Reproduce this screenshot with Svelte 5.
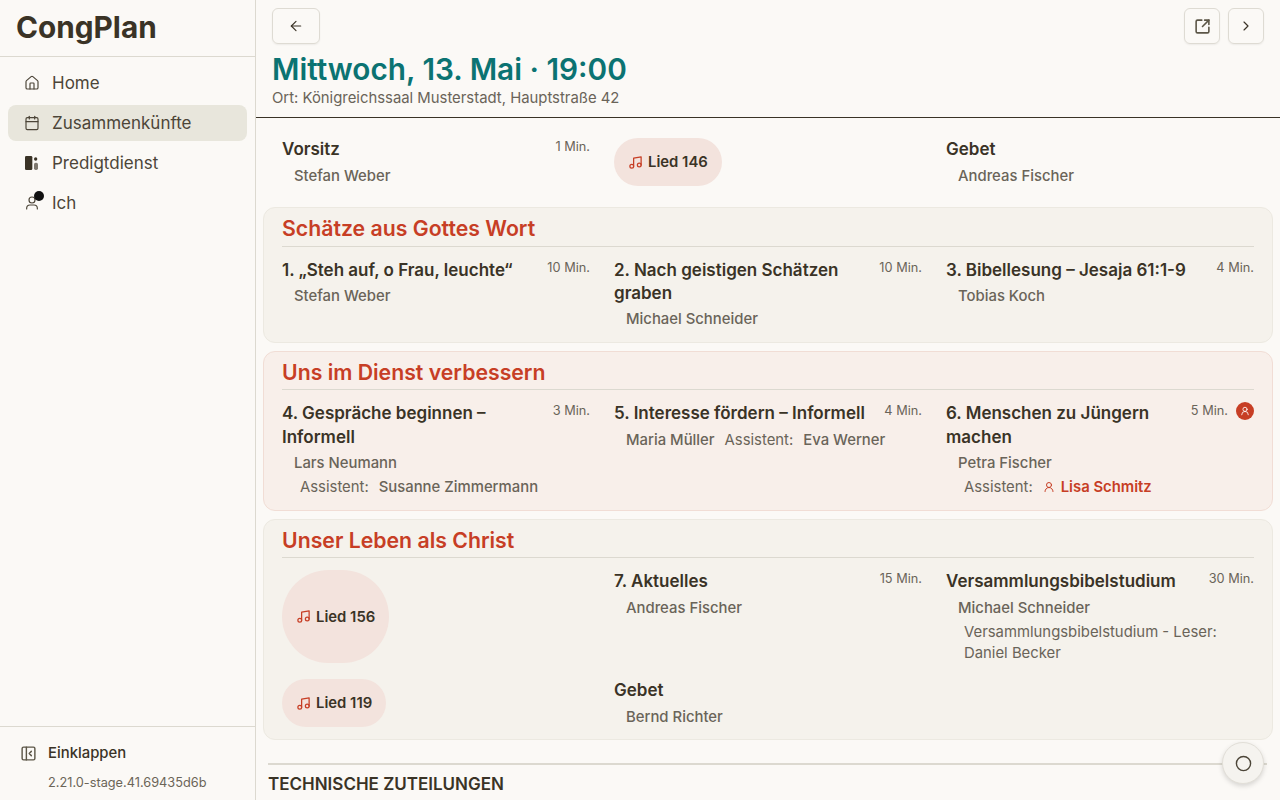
<script>
  const s1 = [
    { t: '1. „Steh auf, o Frau, leuchte“', m: '10 Min.', n: 'Stefan Weber' },
    { t: '2. Nach geistigen Schätzen graben', m: '10 Min.', n: 'Michael Schneider' },
    { t: '3. Bibellesung – Jesaja 61:1-9', m: '4 Min.', n: 'Tobias Koch' }
  ];
</script>

{#snippet music()}
  <svg class="ic-music" viewBox="0 0 24 24"><path d="M9 18V5l12-2v13" /><circle cx="6" cy="18" r="3" /><circle cx="18" cy="16" r="3" /></svg>
{/snippet}

{#snippet user(cls)}
  <svg class={cls} viewBox="0 0 24 24"><circle cx="12" cy="8" r="5" /><path d="M20 21a8 8 0 0 0-16 0" /></svg>
{/snippet}

{#snippet head(t, m)}
  <div class="head"><h3>{t}</h3><span class="min">{m}</span></div>
{/snippet}

{#snippet lied(n)}
  <div class="lied">{@render music()}<span>Lied {n}</span></div>
{/snippet}

<div class="app">
  <aside>
    <div class="brand">CongPlan</div>
    <nav>
      <div class="nav">
        <svg viewBox="0 0 24 24"><path d="M15 21v-8a1 1 0 0 0-1-1h-4a1 1 0 0 0-1 1v8" /><path d="M3 10a2 2 0 0 1 .709-1.528l7-5.999a2 2 0 0 1 2.582 0l7 5.999A2 2 0 0 1 21 10v9a2 2 0 0 1-2 2H5a2 2 0 0 1-2-2z" /></svg>
        <span>Home</span>
      </div>
      <div class="nav active">
        <svg viewBox="0 0 24 24"><path d="M8 2v4" /><path d="M16 2v4" /><rect x="3" y="4" width="18" height="18" rx="2" /><path d="M3 10h18" /></svg>
        <span>Zusammenkünfte</span>
      </div>
      <div class="nav">
        <svg viewBox="0 0 24 24" class="solid"><rect x="1.5" y="1.5" width="11" height="21" rx="2" /><circle cx="17.5" cy="6" r="2.5" /><rect x="15" y="11.5" width="6" height="11" rx="2.5" opacity=".65" /></svg>
        <span>Predigtdienst</span>
      </div>
      <div class="nav">
        <div class="ich">
          <svg viewBox="0 0 24 24"><circle cx="12" cy="7.5" r="4.5" /><path d="M20 21v-1a5 5 0 0 0-5-5H9a5 5 0 0 0-5 5v1" /></svg>
          <i class="dot"></i>
        </div>
        <span>Ich</span>
      </div>
    </nav>
    <div class="foot">
      <div class="collapse">
        <svg viewBox="0 0 24 24"><rect x="3" y="3" width="18" height="18" rx="2" /><path d="M9 3v18" /><path d="m16 15-3-3 3-3" /></svg>
        <span>Einklappen</span>
      </div>
      <div class="version">2.21.0-stage.41.69435d6b</div>
    </div>
  </aside>

  <main>
    <header>
      <div class="btns">
        <button class="back" aria-label="Zurück"><svg viewBox="0 0 24 24"><path d="m12 19-7-7 7-7" /><path d="M19 12H5" /></svg></button>
        <div class="right">
          <button class="sq" aria-label="Öffnen"><svg class="thick" viewBox="0 0 24 24"><path d="M21 13v6a2 2 0 0 1-2 2H5a2 2 0 0 1-2-2V5a2 2 0 0 1 2-2h6" /><path d="m21 3-9 9" /><path d="M15 3h6v6" /></svg></button>
          <button class="sq" aria-label="Weiter"><svg viewBox="0 0 24 24"><path d="m9 18 6-6-6-6" /></svg></button>
        </div>
      </div>
      <h1>Mittwoch, 13. Mai · 19:00</h1>
      <p class="ort">Ort: Königreichssaal Musterstadt, Hauptstraße 42</p>
    </header>

    <div class="content">
      <div class="grid top">
        <div class="item">
          {@render head('Vorsitz', '1 Min.')}
          <div class="name">Stefan Weber</div>
        </div>
        <div>{@render lied(146)}</div>
        <div class="item">
          {@render head('Gebet', '')}
          <div class="name">Andreas Fischer</div>
        </div>
      </div>

      <section class="first">
        <h2>Schätze aus Gottes Wort</h2>
        <div class="grid">
          {#each s1 as it}
            <div class="item">
              {@render head(it.t, it.m)}
              <div class="name">{it.n}</div>
            </div>
          {/each}
        </div>
      </section>

      <section class="pink">
        <h2>Uns im Dienst verbessern</h2>
        <div class="grid">
          <div class="item">
            {@render head('4. Gespräche beginnen – Informell', '3 Min.')}
            <div class="name">Lars Neumann</div>
            <div class="asst"><span>Assistent:</span><span class="val">Susanne Zimmermann</span></div>
          </div>
          <div class="item">
            {@render head('5. Interesse fördern – Informell', '4 Min.')}
            <div class="name inline">Maria Müller<span class="asst-in"><span>Assistent:</span><span class="val">Eva Werner</span></span></div>
          </div>
          <div class="item">
            <div class="head">
              <h3>6. Menschen zu Jüngern machen</h3>
              <span class="min">5 Min.</span>
              <span class="badge">{@render user('ic-badge')}</span>
            </div>
            <div class="name">Petra Fischer</div>
            <div class="asst"><span>Assistent:</span><span class="me">{@render user('ic-me')}Lisa Schmitz</span></div>
          </div>
        </div>
      </section>

      <section>
        <h2>Unser Leben als Christ</h2>
        <div class="grid">
          <div class="stretch">{@render lied(156)}</div>
          <div class="item">
            {@render head('7. Aktuelles', '15 Min.')}
            <div class="name">Andreas Fischer</div>
          </div>
          <div class="item">
            {@render head('Versammlungsbibelstudium', '30 Min.')}
            <div class="name">Michael Schneider</div>
            <div class="reader">Versammlungsbibelstudium - Leser: Daniel Becker</div>
          </div>
          <div>{@render lied(119)}</div>
          <div class="item">
            {@render head('Gebet', '')}
            <div class="name">Bernd Richter</div>
          </div>
        </div>
      </section>

      <div class="tech">
        <h4>TECHNISCHE ZUTEILUNGEN</h4>
      </div>
    </div>

    <button class="fab" aria-label="Aktion"><svg viewBox="0 0 24 24"><circle cx="12" cy="12" r="10" /></svg></button>
  </main>
</div>

<style>
  :global(body) { margin: 0; background: #fbf9f6; }
  .app {
    display: flex; height: 800px; overflow: hidden;
    font-family: Inter, "Liberation Sans", sans-serif; color: #3a3326;
    background: #fbf9f6;
  }
  svg { width: 16px; height: 16px; fill: none; stroke: currentColor; stroke-width: 2; stroke-linecap: round; stroke-linejoin: round; flex: none; display: block; }

  aside { width: 256px; flex: none; box-sizing: border-box; border-right: 1px solid #dcd9d0; display: flex; flex-direction: column; }
  .brand { height: 56px; padding: 0 16px; line-height: 55px; font-size: 29.75px; font-weight: 700; color: #3a3326; border-bottom: 1px solid #dcd9d0; }
  nav { padding: 8px; display: flex; flex-direction: column; gap: 4px; }
  .nav { display: flex; align-items: center; gap: 12px; height: 36px; padding: 0 16px; border-radius: 8px; font-size: 17px; color: #4c4538; }
  .nav svg { stroke-width: 1.75; }
  .nav .solid { stroke: none; fill: #3a3326; }
  .nav.active { background: #e8e6dc; }
  .ich { position: relative; width: 16px; height: 16px; }
  .dot { position: absolute; width: 10px; height: 10px; border-radius: 50%; background: #111; top: -4.3px; left: 10px; }
  .foot { margin-top: auto; border-top: 1px solid #dcd9d0; padding: 16px 20px 7px; }
  .collapse { display: flex; align-items: center; gap: 11px; font-size: 14.875px; font-weight: 500; height: 20px; }
  .collapse svg { width: 17px; height: 17px; stroke-width: 2; color: #5c5647; }
  .version { font-size: 12.75px; color: #6b6558; margin: 10px 0 0 28px; line-height: 20px; }

  main { flex: 1; min-width: 0; position: relative; display: flex; flex-direction: column; }
  header { padding: 8px 16px 9px; border-bottom: 1px solid #3a3326; flex: none; }
  .btns { display: flex; justify-content: space-between; }
  .right { display: flex; gap: 8px; }
  button { background: transparent; border: 1px solid #dedbd3; border-radius: 6px; box-shadow: 0 1px 2px rgba(0,0,0,.06); height: 36px; padding: 0; display: flex; align-items: center; justify-content: center; color: #3a3326; }
  .back { width: 48px; }
  .sq { width: 36px; }
  .back svg, .sq svg { width: 16px; height: 16px; stroke-width: 1.75; }
  .sq svg.thick { width: 17px; height: 17px; stroke-width: 2.25; color: #5c5647; }
  h1 { margin: 8px 0 0; font-size: 29.75px; line-height: 34px; font-weight: 600; color: #0b7372; }
  .ort { margin: 2px 0 0; font-size: 14.875px; line-height: 20px; color: #6a6459; }

  .content { padding: 0 7px; display: flex; flex-direction: column; gap: 8px; min-height: 0; }
  .grid { display: grid; grid-template-columns: repeat(3, 308px); column-gap: 24px; row-gap: 16px; }
  .top { padding: 20px 19px 11.985px; }
  section { border: 1px solid #ece9e1; border-radius: 12px; background: #f5f2ec; padding: 6px 18px 10.625px; }
  section.first { padding-bottom: 11px; }
  section.first .name { margin-top: 1.25px; }
  section.pink { background: #f8efea; border-color: #f1ddd5; }
  h2 { margin: 0 0 12px; padding-bottom: 3.5px; font-size: 21.25px; line-height: 28px; font-weight: 600; color: #c73e25; border-bottom: 1px solid #dcd9d0; }
  .head { display: flex; align-items: flex-start; gap: 8px; }
  h3 { margin: 0; flex: 1; font-size: 17px; line-height: 23.375px; font-weight: 600; color: #3a3326; }
  .min { font-size: 12.75px; line-height: 18px; color: #6a6459; white-space: nowrap; }
  .name { margin: 2.125px 0 0 12px; font-size: 14.875px; font-weight: 500; line-height: 24px; color: #6a6459; }
  .inline { display: flex; gap: 10px; }
  .asst-in { display: flex; gap: 10px; font-weight: 400; }
  .asst { margin-left: 18px; font-size: 14.875px; line-height: 24px; color: #6a6459; display: flex; gap: 10px; }
  .val { font-weight: 500; }
  .reader { margin: 1.7px 0 -0.6px 18px; font-size: 14.875px; line-height: 21px; color: #6a6459; }
  .me { display: inline-flex; align-items: center; gap: 6px; color: #c73e25; font-weight: 600; }
  .badge { width: 18px; height: 18px; border-radius: 50%; background: #c73e25; display: flex; align-items: center; justify-content: center; color: #fff; }
  :global(.ic-badge) { width: 10px !important; height: 10px !important; }
  :global(.ic-me) { width: 12px !important; height: 12px !important; }
  .lied { display: inline-flex; align-items: center; gap: 5px; height: 48px; padding: 0 14px; box-sizing: border-box; border-radius: 9999px; background: #f3e3dd; font-size: 14.875px; font-weight: 600; color: #3a3326; }
  .stretch { display: flex; }
  .stretch .lied { height: auto; }
  :global(.ic-music) { width: 15px !important; height: 15px !important; color: #c73e25; }

  .tech { margin: 15px 6px 0 5px; border-top: 2px solid #dcd9d0; padding-top: 6.5px; }
  h4 { margin: 0; font-size: 17px; line-height: 24px; font-weight: 600; color: #3a3326; }
  .fab { position: absolute; left: 966px; top: 742px; width: 42px; height: 42px; border-radius: 50%; background: #f5f3ef; border: 1px solid #e2dfd8; box-shadow: 0 2px 5px rgba(0,0,0,.15); }
  .fab svg { width: 17px; height: 17px; stroke-width: 2; color: #4c4538; }
</style>
